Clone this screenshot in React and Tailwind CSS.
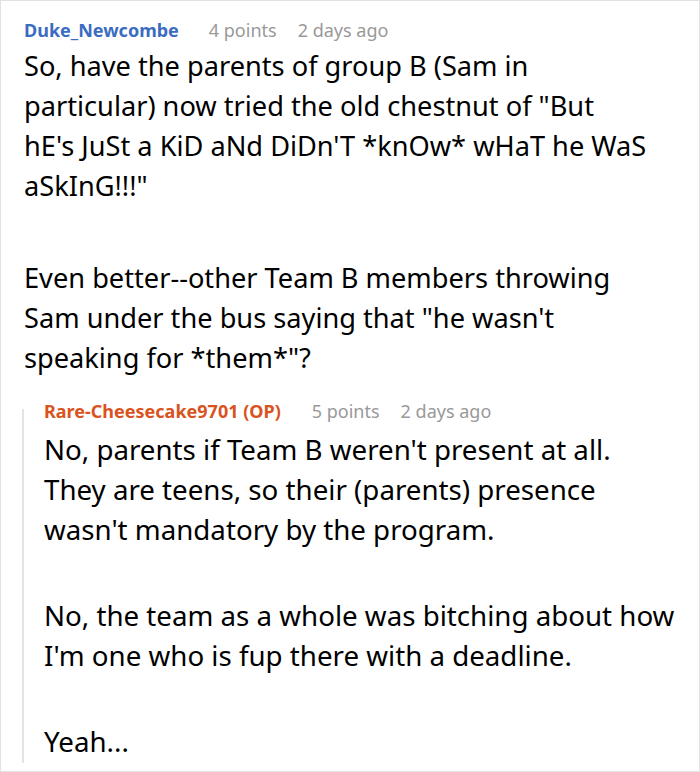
export default function App() {
  return (
    <div className="w-[700px] h-[772px] border border-[#e2e2e2] bg-white pl-[23px] pt-[17px] text-black overflow-hidden" style={{ fontFamily: '"Noto Sans", sans-serif' }}>
      <div className="flex items-baseline h-[24px] leading-[24px] text-[18px]">
        <span className="font-bold text-[#3b6cbf]">Duke_Newcombe</span>
        <span className="ml-[30px] text-[#999999]">4 points</span>
        <span className="ml-[21px] text-[#999999]">2 days ago</span>
      </div>
      <div className="mt-[4px] text-[27.2px] leading-[40px]">
        <p>
          So, have the parents of group B (Sam in<br />
          particular) now tried the old chestnut of "But<br />
          hE's JuSt a KiD aNd DiDn'T *knOw* wHaT he WaS<br />
          aSkInG!!!"
        </p>
        <p className="mt-[52px]">
          Even better--other Team B members throwing<br />
          Sam under the bus saying that "he wasn't<br />
          speaking for *them*"?
        </p>
      </div>

      <div className="flex ml-[-2px] mt-[21px]">
        <div className="w-[2px] bg-[#e4e4e4] mt-[10px] mb-[-2px] shrink-0" />
        <div className="ml-[20px]">
          <div className="flex items-baseline h-[24px] leading-[24px] text-[18px]">
            <span className="font-bold text-[#d9531e]">Rare-Cheesecake9701 (OP)</span>
            <span className="ml-[31px] text-[#999999]">5 points</span>
            <span className="ml-[21px] text-[#999999]">2 days ago</span>
          </div>
          <div className="mt-[6px] text-[27.7px] leading-[40px]">
            <p>
              No, parents if Team B weren't present at all.<br />
              They are teens, so their (parents) presence<br />
              wasn't mandatory by the program.
            </p>
            <p className="mt-[46px]">
              No, the team as a whole was bitching about how<br />
              I'm one who is fup there with a deadline.
            </p>
            <p className="mt-[46px]">Yeah...</p>
          </div>
        </div>
      </div>
    </div>
  );
}
